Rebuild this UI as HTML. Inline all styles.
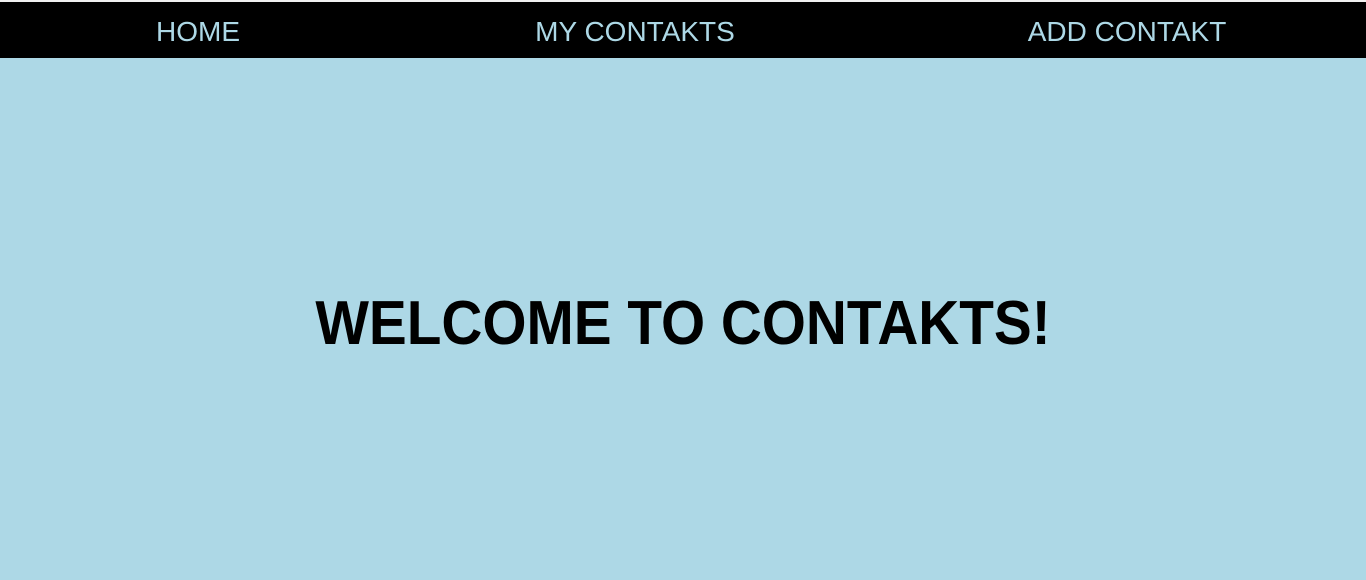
<!DOCTYPE html>
<html><head><style>
html,body{margin:0;padding:0;width:1366px;height:580px;overflow:hidden;background:#add8e6;font-family:"Liberation Sans",Arial,sans-serif}
.top{position:absolute;left:0;top:0;width:1366px;height:2px;background:#f0f0f0}
nav{position:absolute;left:0;top:2px;width:1366px;height:56px;background:#000}
nav span{position:absolute;top:14px;font-size:28px;color:#add8e6;line-height:32px;transform:translateX(-50%);white-space:nowrap}
h1{position:absolute;left:683px;top:288px;margin:0;font-size:62px;line-height:72px;font-weight:bold;color:#000;white-space:nowrap;transform:translateX(-50%) scaleX(0.915)}
</style></head><body>
<div class="top"></div>
<nav>
<span style="left:198px">HOME</span>
<span style="left:635px">MY CONTAKTS</span>
<span style="left:1127px">ADD CONTAKT</span>
</nav>
<h1>WELCOME TO CONTAKTS!</h1>
</body></html>
